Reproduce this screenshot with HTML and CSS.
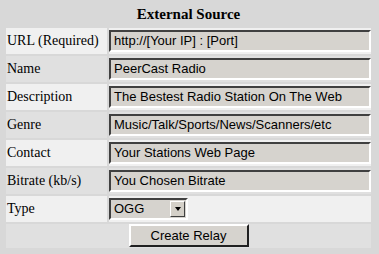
FILE: index.html
```
<!DOCTYPE html>
<html lang="en">
<head>
    <meta charset="UTF-8">
    <title>External Source</title>
    <link rel="stylesheet" href="styles.css">
</head>
<body>
    <table class="relay">
        <tr>
            <th colspan="2" class="title">External Source</th>
        </tr>
        <tr class="light">
            <td class="label">URL (Required)</td>
            <td><div class="field">http://[Your IP] : [Port]</div></td>
        </tr>
        <tr class="dark">
            <td class="label">Name</td>
            <td><div class="field">PeerCast Radio</div></td>
        </tr>
        <tr class="light">
            <td class="label">Description</td>
            <td><div class="field">The Bestest Radio Station On The Web</div></td>
        </tr>
        <tr class="dark">
            <td class="label">Genre</td>
            <td><div class="field">Music/Talk/Sports/News/Scanners/etc</div></td>
        </tr>
        <tr class="light">
            <td class="label">Contact</td>
            <td><div class="field">Your Stations Web Page</div></td>
        </tr>
        <tr class="dark">
            <td class="label">Bitrate (kb/s)</td>
            <td><div class="field">You Chosen Bitrate</div></td>
        </tr>
        <tr class="light">
            <td class="label">Type</td>
            <td>
                <div class="select">
                    <span class="select-text">OGG</span>
                    <span class="select-btn"><span class="arrow"></span></span>
                </div>
            </td>
        </tr>
        <tr class="dark">
            <td colspan="2" class="actions"><button class="create">Create Relay</button></td>
        </tr>
    </table>
</body>
</html>
```
FILE: styles.css
```
html, body {
    margin: 0;
    background-color: #d8d8d8;
}

.relay {
    margin: 0 0 0 4px;
    width: 369px;
    border-collapse: separate;
    border-spacing: 2px;
    font-family: "Liberation Serif", "Times New Roman", serif;
    font-size: 14px;
    color: #000;
}

.relay td, .relay th {
    padding: 0;
}

.title {
    height: 24px;
    font-weight: bold;
    font-size: 15px;
    text-align: center;
    background-color: #d8d8d8;
}

.light td {
    background-color: #f0f0f0;
}

.dark td {
    background-color: #e0e0e0;
}

.label {
    width: 100px;
    height: 26px;
    padding-left: 1px !important;
    white-space: nowrap;
}

.field {
    height: 18px;
    margin: 1px 0;
    padding: 0 3px;
    line-height: 18px;
    font-family: "Liberation Sans", Arial, sans-serif;
    font-size: 13px;
    background-color: #d6d3ce;
    border-top: 2px solid #404040;
    border-left: 2px solid #404040;
    border-right: 2px solid #ffffff;
    border-bottom: 2px solid #ffffff;
    white-space: nowrap;
    overflow: hidden;
}

.select {
    display: flex;
    width: 75px;
    height: 18px;
    margin: 2px 0;
    background-color: #d6d3ce;
    border-top: 2px solid #404040;
    border-left: 2px solid #404040;
    border-right: 2px solid #ffffff;
    border-bottom: 2px solid #ffffff;
    font-family: "Liberation Sans", Arial, sans-serif;
    font-size: 13px;
    line-height: 18px;
}

.select-text {
    flex: 1;
    padding-left: 3px;
}

.select-btn {
    display: flex;
    align-items: center;
    justify-content: center;
    width: 13px;
    height: 14px;
    margin: 1px;
    background-color: #d4d0c8;
    border-top: 1px solid #ffffff;
    border-left: 1px solid #ffffff;
    border-right: 1px solid #404040;
    border-bottom: 1px solid #404040;
}

.arrow {
    width: 0;
    height: 0;
    border-left: 3px solid transparent;
    border-right: 3px solid transparent;
    border-top: 4px solid #000;
}

.actions {
    height: 24px;
    text-align: center;
    vertical-align: top;
}

.create {
    display: block;
    margin: 0 auto;
    width: 120px;
    height: 23px;
    padding: 0;
    font-family: "Liberation Sans", Arial, sans-serif;
    font-size: 13px;
    color: #000;
    background-color: #d6d3ce;
    border-top: 2px solid #ffffff;
    border-left: 2px solid #ffffff;
    border-right: 2px solid #202020;
    border-bottom: 2px solid #202020;
}
```
